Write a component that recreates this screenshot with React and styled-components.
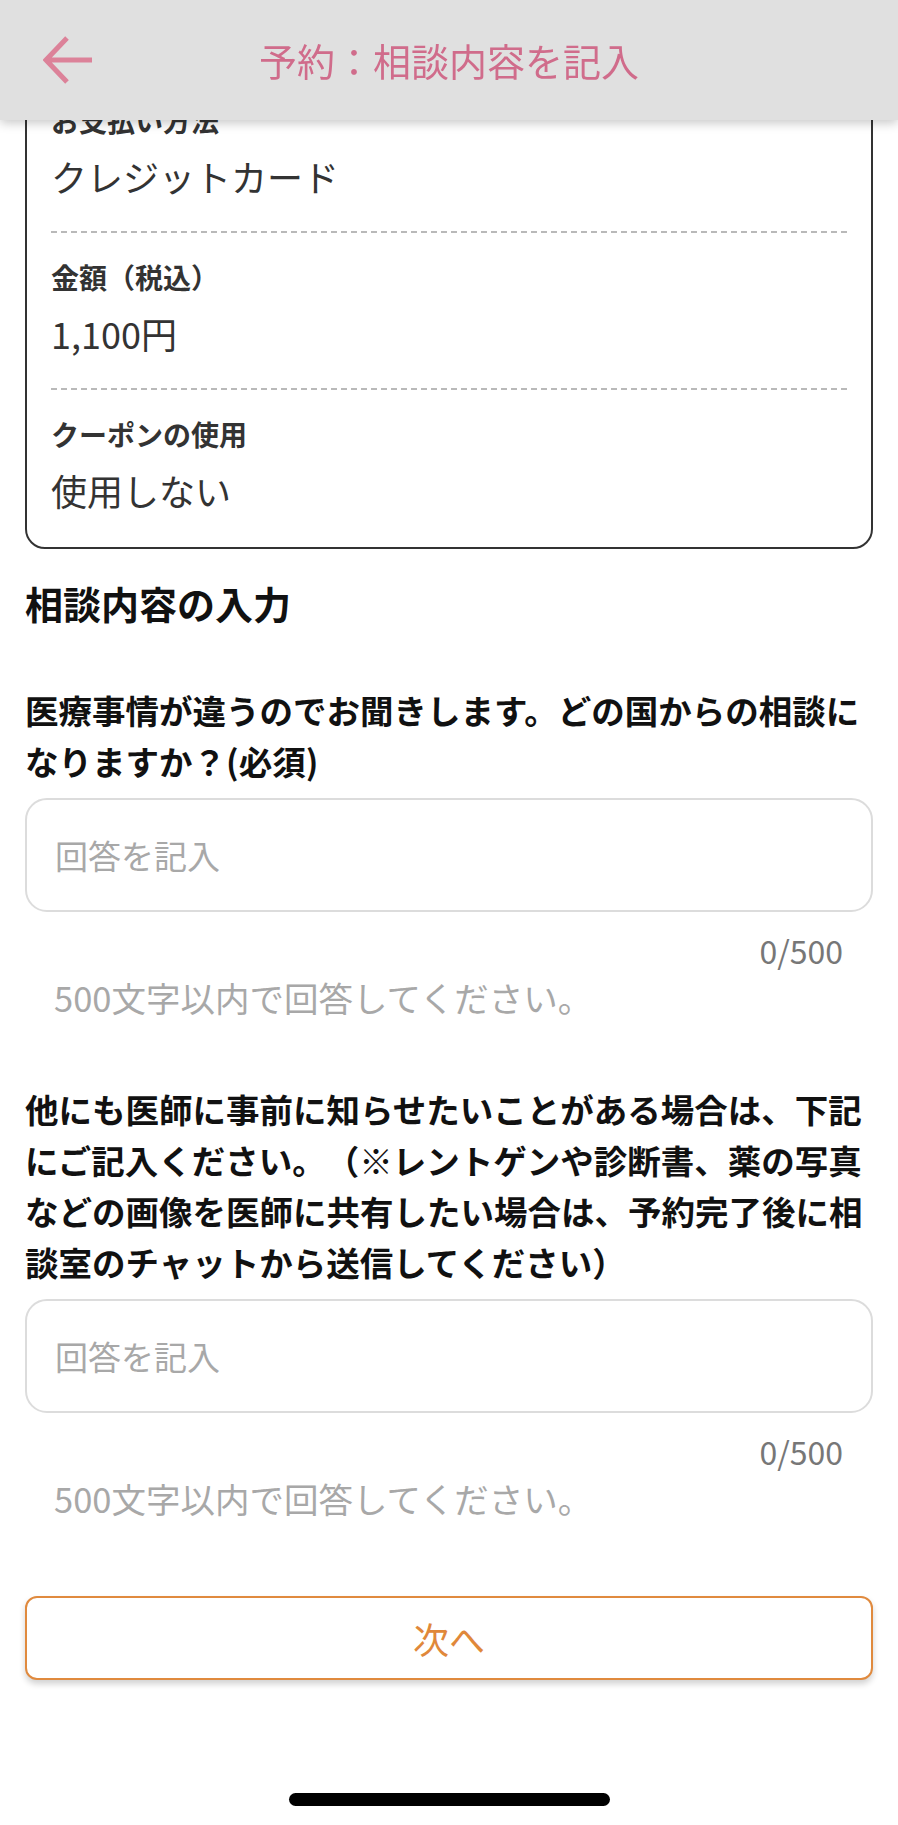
import React from "react";
import styled, { createGlobalStyle } from "styled-components";

const GlobalStyle = createGlobalStyle`
  html, body {
    margin: 0;
    padding: 0;
    background: #ffffff;
  }
  body {
    font-family: "Noto Sans CJK JP", "Noto Sans", sans-serif;
    color: #222;
    text-spacing-trim: space-all;
  }
  * { box-sizing: border-box; }
`;

const Page = styled.div`
  min-height: 1825px;
  display: flex;
  flex-direction: column;
  padding: 74px 25px 19px;
`;

const Header = styled.header`
  position: fixed;
  top: 0;
  left: 0;
  right: 0;
  height: 120px;
  background: #e0e0e0;
  box-shadow: 0 3px 10px rgba(0, 0, 0, 0.22);
  display: grid;
  grid-template-columns: 1fr auto 1fr;
  align-items: center;
  padding: 0 43px;
  z-index: 10;
`;

const BackButton = styled.button`
  justify-self: start;
  width: 50px;
  height: 48px;
  padding: 0;
  border: none;
  background: transparent;
  display: flex;
  align-items: center;
  cursor: pointer;
`;

const Title = styled.h1`
  margin: 0;
  font-size: 38px;
  font-weight: 400;
  line-height: 48px;
  color: #d06c8b;
  white-space: nowrap;
`;

const Card = styled.section`
  border: 2px solid #333;
  border-radius: 20px;
  padding: 0 24px 2px;
`;

const InfoRow = styled.div`
  padding: 26px 0 33px;
  & + & {
    border-top: 2px dashed #b9b9b9;
  }
`;

const InfoLabel = styled.div`
  font-size: 28px;
  line-height: 36px;
  font-weight: 700;
  color: #333;
`;

const InfoValue = styled.div`
  margin-top: 16px;
  font-size: 36px;
  line-height: 44px;
  color: #333;
`;

const SectionTitle = styled.h2`
  margin: 30px 0 0;
  font-size: 38px;
  line-height: 48px;
  font-weight: 700;
  color: #111;
`;

const Question = styled.p`
  margin: ${(p) => p.$gap}px 0 0;
  font-size: 33.5px;
  line-height: 51px;
  font-weight: 700;
  color: #111;
`;

const AnswerBox = styled.div`
  margin-top: 12px;
  height: 114px;
  border: 2px solid #dcdcdc;
  border-radius: 22px;
  display: flex;
  align-items: center;
  padding: 0 28px;
`;

const AnswerInput = styled.input`
  width: 100%;
  border: none;
  outline: none;
  background: transparent;
  font-family: inherit;
  font-size: 33px;
  color: #333;
  padding: 0;
  &::placeholder {
    color: #a8a8a8;
  }
`;

const Counter = styled.div`
  margin-top: 18px;
  padding-right: 30px;
  text-align: right;
  font-size: 32px;
  line-height: 40px;
  color: #777;
`;

const Helper = styled.div`
  margin-top: 5px;
  padding-left: 29px;
  font-size: 34.5px;
  line-height: 44px;
  color: #a8a8a8;
`;

const NextButton = styled.button`
  margin-top: 76px;
  height: 84px;
  width: 100%;
  border: 2px solid #e08a3e;
  border-radius: 12px;
  background: #fff;
  box-shadow: 0 4px 6px rgba(0, 0, 0, 0.18);
  font-family: inherit;
  font-size: 36px;
  color: #e0883a;
  cursor: pointer;
`;

const HomeIndicator = styled.div`
  margin: 113px auto 0;
  width: 321px;
  height: 13px;
  border-radius: 7px;
  background: #000;
`;

const rows = [
  { label: "お支払い方法", value: "クレジットカード" },
  { label: "金額（税込）", value: "1,100円" },
  { label: "クーポンの使用", value: "使用しない" },
];

function AnswerField() {
  return (
    <>
      <AnswerBox>
        <AnswerInput placeholder="回答を記入" />
      </AnswerBox>
      <Counter>0/500</Counter>
      <Helper>500文字以内で回答してください。</Helper>
    </>
  );
}

export default function App() {
  return (
    <>
      <GlobalStyle />
      <Header>
        <BackButton aria-label="戻る">
          <svg width="50" height="48" viewBox="0 0 50 48" fill="none">
            <path
              d="M3 24 H49 M24 2 L3 24 L24 46"
              stroke="#dc8299"
              strokeWidth="5"
              strokeLinecap="butt"
              strokeLinejoin="miter"
            />
          </svg>
        </BackButton>
        <Title>予約：相談内容を記入</Title>
        <span />
      </Header>
      <Page>
        <Card>
          {rows.map((r) => (
            <InfoRow key={r.label}>
              <InfoLabel>{r.label}</InfoLabel>
              <InfoValue>{r.value}</InfoValue>
            </InfoRow>
          ))}
        </Card>
        <SectionTitle>相談内容の入力</SectionTitle>
        <Question $gap={57}>
          医療事情が違うのでお聞きします。どの国からの相談になりますか？(必須)
        </Question>
        <AnswerField />
        <Question $gap={64}>
          他にも医師に事前に知らせたいことがある場合は、下記にご記入ください。（※レントゲンや診断書、薬の写真などの画像を医師に共有したい場合は、予約完了後に相談室のチャットから送信してください）
        </Question>
        <AnswerField />
        <NextButton>次へ</NextButton>
        <HomeIndicator />
      </Page>
    </>
  );
}
